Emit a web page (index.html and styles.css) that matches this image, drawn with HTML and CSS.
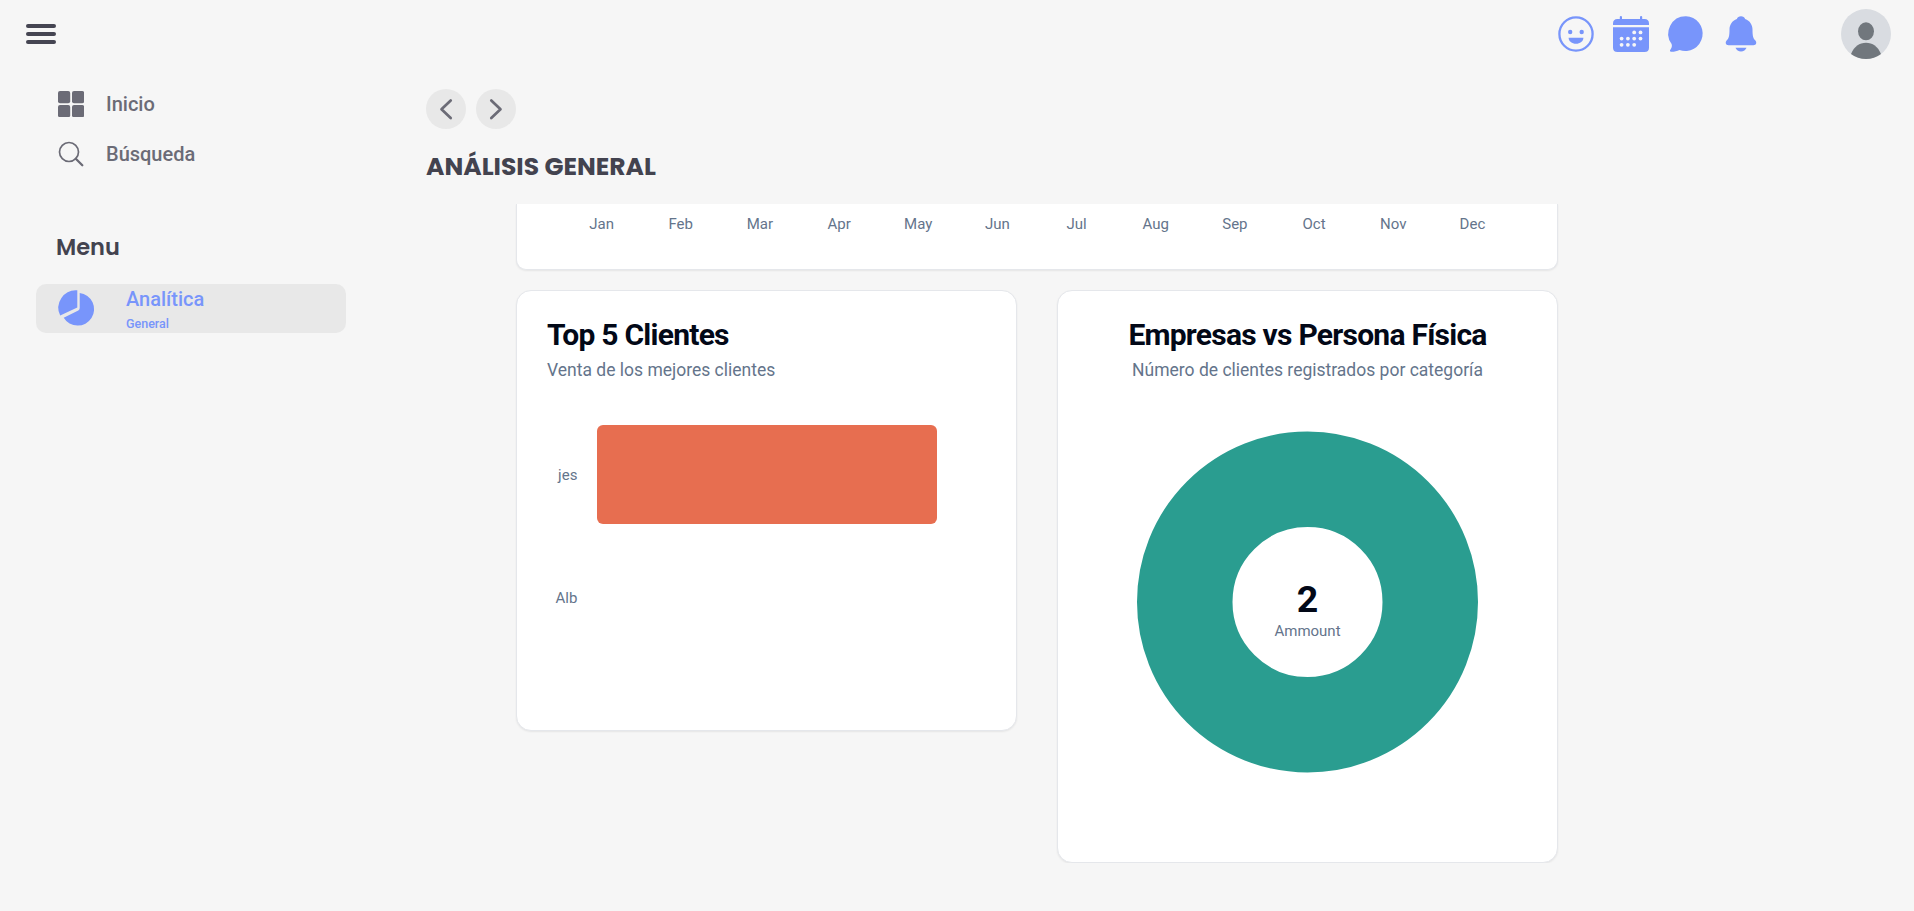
FILE: index.html
```html
<!DOCTYPE html>
<html lang="es">
<head>
<meta charset="utf-8">
<title>Análisis general</title>
<link rel="stylesheet" href="styles.css">
</head>
<body>
<header class="topbar">
  <button class="burger" aria-label="Menu"><span></span><span></span><span></span></button>
  <div class="actions">
    <svg class="icon" viewBox="0 0 36 36"><circle cx="18" cy="18" r="16.6" fill="none" stroke="currentColor" stroke-width="2.3"/><circle cx="12.2" cy="16" r="2.2"/><circle cx="23.7" cy="16" r="2.2"/><path d="M10.6 21.7H25.4C25.4 25.3 22 27.7 18 27.7S10.6 25.3 10.6 21.7Z"/></svg>
    <svg class="icon" viewBox="0 0 36 36"><path d="M0 9V7.500Q0 3 4.500 3H6.800V1.100A1.100 1.100 0 0 1 9 1.100V3H27V1.100A1.100 1.100 0 0 1 29.200 1.100V3H31.500Q36 3 36 7.500V9Z"/><path d="M0 11.200H36V31.500Q36 36 31.500 36H4.500Q0 36 0 31.500Z"/><g class="dots"><circle cx="21.200" cy="16.400" r="1.900"/><circle cx="27.500" cy="16.400" r="1.900"/><circle cx="8.600" cy="22.600" r="1.900"/><circle cx="14.900" cy="22.600" r="1.900"/><circle cx="21.200" cy="22.600" r="1.900"/><circle cx="27.500" cy="22.600" r="1.900"/><circle cx="8.600" cy="28.800" r="1.900"/><circle cx="14.900" cy="28.800" r="1.900"/><circle cx="21.200" cy="28.800" r="1.900"/></g></svg>
    <svg class="icon" viewBox="0 0 36 36"><path d="M18 .2A17.400 17.400 0 1 1 11.500 34C9 35.100 5.500 36 3.200 35.800C1.700 35.600 1.600 34.400 2.500 33.500C3.700 32.100 4.300 30 3.600 28A17.500 17.500 0 0 1 18 .2Z"/></svg>
    <svg class="icon" viewBox="0 0 36 36"><path d="M18 .2C20 .2 21.600 1.300 22.100 2.900C27 4.600 29.500 8.800 29.500 13.500C29.500 20.500 30.300 22.300 32 24.100C34.300 26.600 33.200 29.300 30.500 29.300H5.500C2.800 29.300 1.700 26.600 4 24.100C5.700 22.300 6.500 20.500 6.500 13.500C6.500 8.800 9 4.600 13.900 2.900C14.400 1.300 16 .2 18 .2Z"/><path d="M12.500 31.800H23.500C22.600 34.200 20.500 35.600 18 35.600S13.400 34.200 12.500 31.800Z"/></svg>
  </div>
  <svg class="avatar" viewBox="0 0 50 50"><circle cx="25" cy="25" r="25" fill="#d9dce1"/><ellipse cx="25" cy="22.300" rx="8" ry="9" fill="#71777d"/><path d="M10 45C13 37.500 18.500 33.700 25 33.700S37 37.500 40 45A25 25 0 0 1 10 45Z" fill="#71777d"/></svg>
</header>
<div class="layout">
  <aside class="sidebar">
    <a class="link"><svg class="link-icon" viewBox="0 0 26 26"><rect width="12.200" height="12.200" rx="2"/><rect x="14" width="12.200" height="12.200" rx="2"/><rect y="14" width="12.200" height="12.200" rx="2"/><rect x="14" y="14" width="12.200" height="12.200" rx="2"/></svg>Inicio</a>
    <a class="link"><svg class="link-icon" viewBox="0 0 26 26"><circle cx="11" cy="11" r="9.500" fill="none" stroke="currentColor" stroke-width="1.700"/><path d="M17.800 17.800L24.300 24.300" stroke="currentColor" stroke-width="2.300" stroke-linecap="round"/></svg>Búsqueda</a>
    <h2 class="menu-title">Menu</h2>
    <a class="entry">
      <svg class="icon" viewBox="0 0 36 36"><path d="M19.300 .2V17.500L2.200 25.500A17.600 17.600 0 0 1 19.300 .2Z"/><path d="M21.700 2.900A16.400 16.400 0 1 1 5.700 27.700L20.300 20.500Q21.700 19.800 21.700 18Z"/></svg>
      <span class="entry-text"><span class="entry-name">Analítica</span><span class="entry-sub">General</span></span>
    </a>
  </aside>
  <main class="main">
    <nav class="pager">
      <button class="round" aria-label="Anterior"><svg viewBox="0 0 40 40"><path d="M24.700 11.500L15.500 20.300L24.700 29"/></svg></button>
      <button class="round" aria-label="Siguiente"><svg viewBox="0 0 40 40"><path d="M15.300 11.500L24.500 20.300L15.300 29"/></svg></button>
    </nav>
    <h1 class="title">ANÁLISIS GENERAL</h1>
    <div class="scroll">
      <section class="months"><span>Jan</span><span>Feb</span><span>Mar</span><span>Apr</span><span>May</span><span>Jun</span><span>Jul</span><span>Aug</span><span>Sep</span><span>Oct</span><span>Nov</span><span>Dec</span></section>
      <div class="cards">
        <section class="card clients">
          <h3>Top 5 Clientes</h3>
          <p>Venta de los mejores clientes</p>
          <div class="bars">
            <div class="row"><span>jes</span><div class="bar"></div></div>
            <div class="row"><span>Alb</span></div>
          </div>
        </section>
        <section class="card split">
          <h3>Empresas vs Persona Física</h3>
          <p>Número de clientes registrados por categoría</p>
          <svg class="donut" viewBox="0 0 341 342"><circle cx="170.500" cy="171" r="122.750" fill="none" stroke="#2a9d90" stroke-width="95.500"/><text class="total" x="170.500" y="180.500">2</text><text class="unit" x="170.500" y="204.500">Ammount</text></svg>
        </section>
      </div>
    </div>
  </main>
</div>
</body>
</html>
```
FILE: styles.css
```css
* { box-sizing: border-box; }
body { margin: 0; height: 911px; overflow: hidden; background: #f6f6f6; font-family: Roboto, "Liberation Sans", sans-serif; color: #6b6b76; }
h1, h2, h3, p { margin: 0; }
button { border: 0; padding: 0; background: none; }
svg { display: block; fill: currentColor; }
.topbar { height: 68px; display: flex; align-items: center; padding: 0 23px 0 26px; }
.burger { width: 30px; height: 20px; display: flex; flex-direction: column; justify-content: space-between; }
.burger span { height: 4px; border-radius: 2px; background: #454552; }
.actions { display: flex; gap: 19px; margin-left: auto; margin-right: 82px; color: #7895fb; }
.icon { width: 36px; height: 36px; flex: none; overflow: visible; }
.dots { fill: #f6f6f6; }
.avatar { width: 50px; height: 50px; }
.layout { display: flex; height: 843px; }
.sidebar { width: 426px; padding: 11px 80px 0 36px; }
.link { height: 50px; display: flex; align-items: center; gap: 22px; padding-left: 22px; font-size: 20px; font-weight: 500; }
.link-icon { width: 26px; height: 26px; }
.menu-title { margin: 50px 0 0 20px; height: 36px; font: 600 22.5px/36px Poppins, Inter, sans-serif; color: #43434f; }
.entry { margin-top: 19px; width: 310px; height: 49px; display: flex; align-items: flex-start; gap: 32px; padding-left: 22px; border-radius: 10px; background: #e8e8e8; color: #7895fb; font-weight: 500; }
.entry .icon { margin-top: 6px; }
.entry-text { display: flex; flex-direction: column; }
.entry-name { margin-top: 1px; font-size: 20px; line-height: 28px; }
.entry-sub { margin-top: 1px; font-size: 12.5px; line-height: 20px; }
.main { width: 1222px; padding-top: 21px; }
.pager { display: flex; gap: 10px; }
.round { width: 40px; height: 40px; border-radius: 50%; background: #e8e8e8; }
.round path { fill: none; stroke: #6b6b76; stroke-width: 2.7; stroke-linecap: round; stroke-linejoin: round; }
.title { height: 75px; padding-top: 19px; font: 700 25px/38px Poppins, Inter, sans-serif; color: #43434f; }
.scroll { height: 659px; padding: 0 90px; overflow: hidden; }
.months, .card { background: #fff; border: 1px solid #e5e7eb; box-shadow: 0 1px 2px rgba(0,0,0,.07); }
.months { height: 66px; border-top: 0; border-radius: 0 0 10px 10px; padding: 11px 45px 0; display: grid; grid-template-columns: repeat(12, 1fr); text-align: center; font-size: 15px; line-height: 18px; color: #64748b; }
.cards { display: flex; gap: 40px; align-items: flex-start; margin-top: 20px; }
.card { width: 501px; border-radius: 15px; padding: 29px 30px; }
.card h3 { font-size: 30px; line-height: 30px; font-weight: 700; letter-spacing: -.75px; color: #020817; white-space: nowrap; }
.card p { margin-top: 8px; font-size: 17.5px; line-height: 25px; color: #64748b; white-space: nowrap; }
.clients { height: 441px; }
.bars { margin-top: 42px; }
.row { display: flex; align-items: center; gap: 20px; height: 99px; margin-bottom: 24px; font-size: 15px; color: #64748b; }
.row span { width: 30.4px; text-align: right; }
.bar { width: 340px; height: 99px; border-radius: 6px; background: #e76e50; }
.split { height: 573px; text-align: center; }
.donut { width: 341px; height: 342px; margin: 48px auto 0; }
.donut text { text-anchor: middle; }
.total { font-size: 37.5px; font-weight: 700; fill: #020817; }
.unit { font-size: 15px; fill: #64748b; }
```
